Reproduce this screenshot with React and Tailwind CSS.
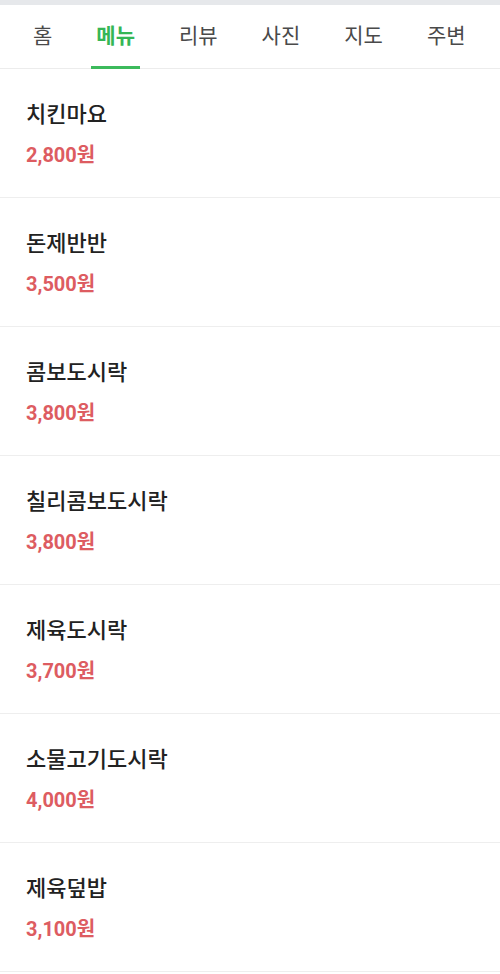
import React, { useState } from "react";

const tabs = ["홈", "메뉴", "리뷰", "사진", "지도", "주변"];

const menus = [
  { name: "치킨마요", price: "2,800원" },
  { name: "돈제반반", price: "3,500원" },
  { name: "콤보도시락", price: "3,800원" },
  { name: "칠리콤보도시락", price: "3,800원" },
  { name: "제육도시락", price: "3,700원" },
  { name: "소물고기도시락", price: "4,000원" },
  { name: "제육덮밥", price: "3,100원" },
];

function App() {
  const [active, setActive] = useState("메뉴");

  return (
    <div
      className="w-[500px] min-h-[974px] bg-white"
      style={{ fontFamily: 'Roboto, "Noto Sans CJK KR", sans-serif' }}
    >
      <div className="h-[5px] bg-[#e6e8eb]"></div>

      {/* tabs */}
      <ul className="flex h-[64px] gap-[34px] pl-[28px] border-b border-[#ececec]">
        {tabs.map((tab) => (
          <li key={tab} className="relative flex items-center">
            <button
              className={`px-[5px] text-[21px] leading-none ${
                active === tab ? "text-[#35b655] font-bold" : "text-[#4a4a4a]"
              }`}
              onClick={() => setActive(tab)}
            >
              {tab}
            </button>
            {active === tab && (
              <span className="absolute left-0 right-0 -bottom-[1px] h-[3px] bg-[#3cba5c]"></span>
            )}
          </li>
        ))}
      </ul>

      {/* menu list */}
      <ul>
        {menus.map((item) => (
          <li
            key={item.name}
            className="px-[26px] pt-[33px] pb-[31px] border-b border-[#eeeeee]"
          >
            <div className="text-[22px] leading-[26px] font-medium text-[#222]">
              {item.name}
            </div>
            <div className="mt-[16px] text-[20px] leading-[22px] font-bold text-[#dd5c61]">
              {item.price}
            </div>
          </li>
        ))}
      </ul>
    </div>
  );
}

export default App;
